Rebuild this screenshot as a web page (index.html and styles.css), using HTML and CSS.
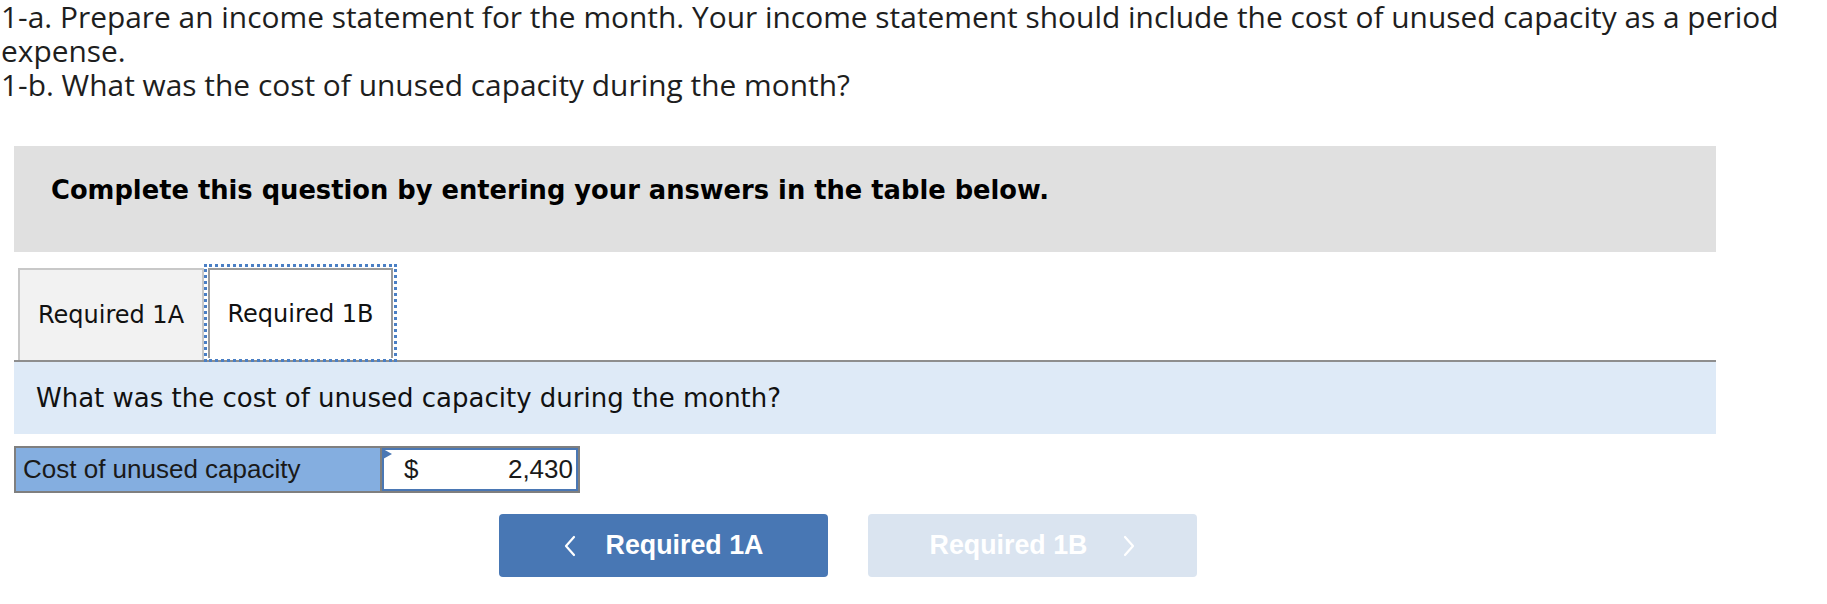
FILE: index.html
```html
<!DOCTYPE html>
<html lang="en">
<head>
<meta charset="utf-8">
<title>Cost of unused capacity</title>
<link rel="stylesheet" href="styles.css">
</head>
<body>
<div class="intro">
  <p class="intro-line">1-a. Prepare an income statement for the month. Your income statement should include the cost of unused capacity as a period expense.</p>
  <p class="intro-line">1-b. What was the cost of unused capacity during the month?</p>
</div>
<div class="work">
  <div class="panel">Complete this question by entering your answers in the table below.</div>
  <div class="tabs">
    <div class="tab">Required 1A</div>
    <div class="tab active">Required 1B</div>
  </div>
  <div class="question">What was the cost of unused capacity during the month?</div>
  <div class="row">
    <div class="label">Cost of unused capacity</div>
    <div class="cell">
      <div class="input">
        <span class="flag"></span>
        <span class="cur">$</span>
        <span class="amt">2,430</span>
      </div>
    </div>
  </div>
  <div class="nav">
    <button class="btn prev" type="button">
      <svg class="chev" width="12" height="22" viewBox="0 0 12 22"><polyline points="10,2 2,11 10,20" fill="none" stroke="#fff" stroke-width="2.2" stroke-linecap="round" stroke-linejoin="round"/></svg>
      <span class="btn-text">Required 1A</span>
    </button>
    <button class="btn next" type="button">
      <span class="btn-text">Required 1B</span>
      <svg class="chev" width="12" height="22" viewBox="0 0 12 22"><polyline points="2,2 10,11 2,20" fill="none" stroke="#fff" stroke-width="2.2" stroke-linecap="round" stroke-linejoin="round"/></svg>
    </button>
  </div>
</div>
</body>
</html>
```
FILE: styles.css
```css
html, body {
  margin: 0;
  padding: 0;
  background: #ffffff;
}

body {
  width: 1827px;
  color: #1b1b1b;
}

.intro {
  padding-left: 1px;
  font-family: "Open Sans", "Liberation Sans", sans-serif;
  font-size: 29.9px;
  line-height: 34px;
  color: #1e1e1e;
}

.intro-line {
  margin: 0;
}

.work {
  margin-left: 14px;
  width: 1702px;
}

.panel {
  margin-top: 44px;
  height: 106px;
  box-sizing: border-box;
  padding: 31px 0 0 37px;
  background: #e0e0e0;
  font-family: "DejaVu Sans", Verdana, sans-serif;
  font-weight: bold;
  font-size: 25.75px;
  line-height: 26px;
  color: #000;
}

.tabs {
  margin-top: 16px;
  display: flex;
  gap: 4px;
  padding-left: 4px;
  border-bottom: 2px solid #8e8e8e;
}

.tab {
  width: 186px;
  height: 92px;
  box-sizing: border-box;
  display: flex;
  align-items: center;
  justify-content: center;
  background: #f2f2f2;
  border: 2px solid #c8c8c8;
  border-bottom: none;
  font-family: "DejaVu Sans", Verdana, sans-serif;
  font-size: 24px;
  color: #111;
}

.tab.active {
  width: 185px;
  height: 90px;
  align-self: flex-start;
  background: #fff;
  border-color: #9a9a9a;
  outline: 3px dotted #4a7fc4;
  outline-offset: 1px;
}

.question {
  height: 72px;
  box-sizing: border-box;
  display: flex;
  align-items: center;
  padding-left: 22px;
  background: #deeaf7;
  font-family: "DejaVu Sans", Verdana, sans-serif;
  font-size: 26px;
  color: #111;
}

.row {
  margin-top: 12px;
  display: flex;
}

.label {
  width: 368px;
  height: 47px;
  box-sizing: border-box;
  display: flex;
  align-items: center;
  padding-left: 7px;
  background: #84aee0;
  border: 2px solid #7f7f7f;
  font-family: "Liberation Sans", Arial, sans-serif;
  font-size: 26px;
  color: #1a1a1a;
}

.cell {
  width: 198px;
  height: 47px;
  box-sizing: border-box;
  border: 2px solid #7f7f7f;
  border-left: none;
  display: flex;
}

.input {
  position: relative;
  flex: 1;
  display: flex;
  align-items: center;
  justify-content: space-between;
  padding: 0 3px 0 20px;
  background: #fff;
  border: 2px solid #4a77b4;
  font-family: "Liberation Sans", Arial, sans-serif;
  font-size: 26px;
  color: #1a1a1a;
}

.flag {
  position: absolute;
  left: -1px;
  top: -1px;
  width: 0;
  height: 0;
  border-left: 9px solid #4a77b4;
  border-top: 5px solid transparent;
  border-bottom: 5px solid transparent;
}

.nav {
  margin-top: 21px;
  display: flex;
  gap: 40px;
  padding-left: 485px;
}

.btn {
  width: 329px;
  height: 63px;
  border: none;
  border-radius: 4px;
  display: flex;
  align-items: center;
  justify-content: center;
  padding: 0;
  font-family: "Liberation Sans", Arial, sans-serif;
  font-weight: bold;
  font-size: 26.8px;
  color: #fff;
}

.btn.prev {
  background: #4877b4;
}

.btn.prev .chev {
  margin-right: 30px;
}

.btn.next {
  background: #dae4f0;
}

.btn.next .chev {
  margin-left: 36px;
}
```
